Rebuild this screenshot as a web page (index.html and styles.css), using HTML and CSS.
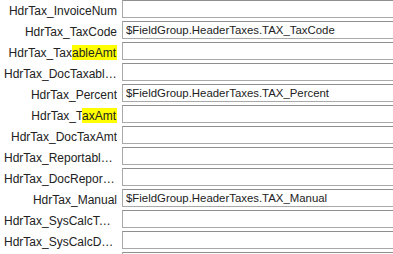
FILE: index.html
```html
<!DOCTYPE html>
<html lang="en">
<head>
    <meta charset="UTF-8">
    <meta name="viewport" content="width=device-width, initial-scale=1.0">
    <title>Header Taxes</title>
    <link rel="stylesheet" href="styles.css">
</head>
<body>
<div class="field-list">
    <div class="field-row">
        <label class="field-label">HdrTax_InvoiceNum</label>
        <input class="field-input" type="text" value="">
    </div>
    <div class="field-row">
        <label class="field-label">HdrTax_TaxCode</label>
        <input class="field-input" type="text" value="$FieldGroup.HeaderTaxes.TAX_TaxCode">
    </div>
    <div class="field-row">
        <label class="field-label">HdrTax_Tax<span class="hl">ableAmt</span></label>
        <input class="field-input" type="text" value="">
    </div>
    <div class="field-row">
        <label class="field-label">HdrTax_DocTaxableAmt</label>
        <input class="field-input" type="text" value="">
    </div>
    <div class="field-row">
        <label class="field-label">HdrTax_Percent</label>
        <input class="field-input" type="text" value="$FieldGroup.HeaderTaxes.TAX_Percent">
    </div>
    <div class="field-row">
        <label class="field-label">HdrTax_T<span class="hl">axAmt</span></label>
        <input class="field-input" type="text" value="">
    </div>
    <div class="field-row">
        <label class="field-label">HdrTax_DocTaxAmt</label>
        <input class="field-input" type="text" value="">
    </div>
    <div class="field-row">
        <label class="field-label">HdrTax_ReportableAmt</label>
        <input class="field-input" type="text" value="">
    </div>
    <div class="field-row">
        <label class="field-label">HdrTax_DocReportableAmt</label>
        <input class="field-input" type="text" value="">
    </div>
    <div class="field-row">
        <label class="field-label">HdrTax_Manual</label>
        <input class="field-input" type="text" value="$FieldGroup.HeaderTaxes.TAX_Manual">
    </div>
    <div class="field-row">
        <label class="field-label">HdrTax_SysCalcTaxAmt</label>
        <input class="field-input" type="text" value="">
    </div>
    <div class="field-row">
        <label class="field-label">HdrTax_SysCalcDocTaxAmt</label>
        <input class="field-input" type="text" value="">
    </div>
    <div class="field-row">
        <label class="field-label"></label>
        <input class="field-input" type="text" value="">
    </div>
</div>
</body>
</html>
```

FILE: styles.css
```css
html, body {
    margin: 0;
    padding: 0;
    background-color: #fff;
    overflow: hidden;
}
.field-list {
    width: 440px;
    font-family: "Liberation Sans", Arial, sans-serif;
    font-size: 12px;
    color: #222;
}
.field-row {
    display: flex;
    align-items: center;
    height: 18px;
    margin-bottom: 3px;
}
/* 라벨 영역 */
.field-label {
    box-sizing: border-box;
    width: 117px;
    padding-left: 4px;
    padding-top: 3px;
    text-align: right;
    white-space: nowrap;
    overflow: hidden;
    text-overflow: ellipsis;
    flex-shrink: 0;
}
.hl {
    background-color: #ffff00;
    padding: 1px 1px 1px 0;
}
/* 입력 영역 */
.field-input {
    box-sizing: border-box;
    flex: 1;
    height: 18px;
    margin: 0 0 0 5px;
    padding: 0 3px;
    font-family: "Liberation Sans", Arial, sans-serif;
    font-size: 11.4px;
    color: #222;
    background-color: #fff;
    border: 1px solid #a9a9a9;
    border-top-color: #8f8f8f;
    border-radius: 0;
    outline: none;
}
```
